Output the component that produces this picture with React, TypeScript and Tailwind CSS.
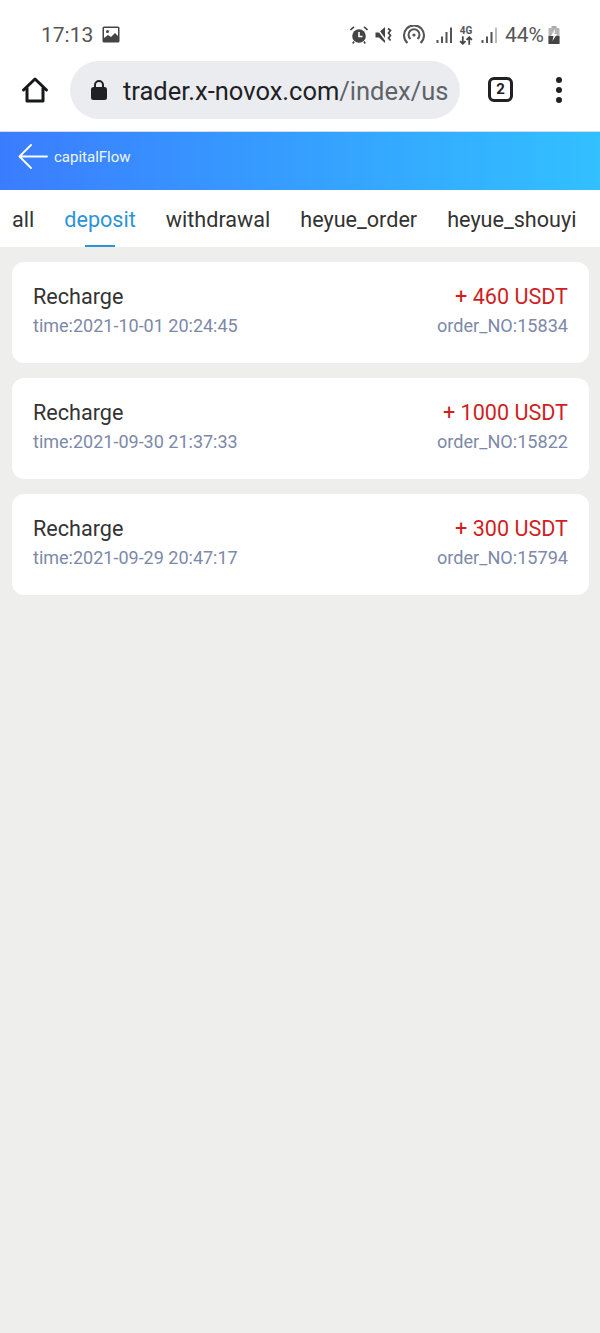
const records = [
  { amount: '+ 460 USDT', time: 'time:2021-10-01 20:24:45', order: 'order_NO:15834' },
  { amount: '+ 1000 USDT', time: 'time:2021-09-30 21:37:33', order: 'order_NO:15822' },
  { amount: '+ 300 USDT', time: 'time:2021-09-29 20:47:17', order: 'order_NO:15794' },
]

const tabs = ['all', 'deposit', 'withdrawal', 'heyue_order', 'heyue_shouyi']

function Signal({ faded }: { faded?: boolean }) {
  return (
    <svg width="17" height="17" viewBox="0 0 17 17" fill="#555">
      <rect x="0.5" y="13" width="2" height="3" />
      <rect x="5" y="9.5" width="2" height="6.5" />
      <rect x="9.5" y="5" width="2" height="11" />
      <rect x="14" y="0.5" width="2" height="15.5" fill={faded ? '#bbb' : '#555'} />
    </svg>
  )
}

function StatusBar() {
  return (
    <div className="flex h-[52px] items-end justify-between pl-[41px] pr-[40px] pb-[4px] text-[#555]">
      <div className="flex items-center gap-[9px]">
        <span className="text-[21px] leading-[26px]">17:13</span>
        <svg width="18" height="17" viewBox="0 0 18 17" className="mb-[2px]">
          <rect x="0.5" y="0.5" width="17" height="16" rx="1.5" fill="#444" />
          <rect x="2" y="2" width="14" height="13" fill="#fff" />
          <circle cx="5.5" cy="5.5" r="1.5" fill="#444" />
          <path d="M2 15v-3l4-3 3 2 4-4 3 3v5z" fill="#444" />
        </svg>
      </div>
      <div className="flex items-center">
        <svg width="18" height="18" viewBox="0 0 18 18" fill="#444" className="mr-[7px]">
          <circle cx="9" cy="10" r="6.8" />
          <path d="M9 6v4.5h3.5" stroke="#fff" strokeWidth="1.6" fill="none" />
          <path d="M0.5 4 4 0.8M17.5 4 14 0.8M4 15.5 2.8 17.5M14 15.5l1.2 2" stroke="#444" strokeWidth="1.6" />
        </svg>
        <svg width="18" height="18" viewBox="0 0 18 18" fill="#444" className="mr-[10px]">
          <path d="M0.5 6.5h3.5L10 1v16l-6-5.5H0.5z" />
          <path d="M1 1l11 15" stroke="#fff" strokeWidth="1.5" />
          <path d="M13 2.5l2.5 2-2 2.5 2 2.5-2 2.5 2 2.5" stroke="#444" strokeWidth="1.7" fill="none" />
        </svg>
        <svg width="22" height="20" viewBox="0 0 22 20" fill="none" stroke="#555" strokeWidth="2" className="mr-[11px]">
          <path d="M4.5 18A10 10 0 1 1 17.5 18" />
          <path d="M7.5 14A5.5 5.5 0 1 1 14.5 14" />
          <circle cx="11" cy="10" r="1.6" fill="#555" stroke="none" />
        </svg>
        <Signal />
        <div className="ml-[6px] mr-[8px] flex w-[14px] flex-col items-center">
          <span className="text-[10px] font-bold leading-[10px]">4G</span>
          <svg width="14" height="9" viewBox="0 0 13 8" fill="none" stroke="#444" strokeWidth="1.6">
            <path d="M3.5 0v7M1 4.5l2.5 2.5L6 4.5M9.5 8V1M7 3.5 9.5 1 12 3.5" />
          </svg>
        </div>
        <Signal faded />
        <span className="ml-[7px] text-[21px] leading-[26px]">44%</span>
        <svg width="12" height="18" viewBox="0 0 12 18" className="ml-[4px]">
          <rect x="3.5" y="0" width="5" height="2" fill="#aaa" />
          <rect x="0.5" y="2" width="11" height="16" rx="1" fill="#b5b5b5" />
          <rect x="0.5" y="10" width="11" height="8" fill="#444" />
          <path d="M7 3 3 10h2.5L4.5 15 9 8H6.5z" fill="#fff" />
        </svg>
      </div>
    </div>
  )
}

function BrowserBar() {
  return (
    <div className="flex h-[79px] items-center pb-[4px]">
      <div className="flex w-[70px] justify-center">
        <svg width="28" height="28" viewBox="0 0 28 28" fill="none" stroke="#16181b" strokeWidth="3" strokeLinejoin="round" strokeLinecap="round">
          <path d="M2.5 14 14 3l11.5 11M6 12v13h16V12" />
        </svg>
      </div>
      <div className="flex h-[58px] w-[390px] items-center rounded-full bg-[#ebecf0] pl-[20px]">
        <svg width="18" height="22" viewBox="0 0 18 22" className="mr-[15px] shrink-0">
          <path d="M5 9V6a4 4 0 0 1 8 0v3" fill="none" stroke="#202124" strokeWidth="2" />
          <rect x="1" y="8" width="16" height="13" rx="2.5" fill="#202124" />
        </svg>
        <span className="overflow-hidden pt-[3px] text-[25.5px] leading-[32px] whitespace-nowrap text-[#202124]">
          trader.x-novox.com<span className="text-[#5f6368]">/index/us</span>
        </span>
      </div>
      <div className="ml-[28px] flex h-[25px] w-[25px] items-center justify-center rounded-[6px] border-[3px] border-[#202124] text-[15px] font-bold text-[#202124]">
        2
      </div>
      <div className="ml-[43px] flex flex-col gap-[4px]">
        <span className="h-[6px] w-[6px] rounded-full bg-[#202124]" />
        <span className="h-[6px] w-[6px] rounded-full bg-[#202124]" />
        <span className="h-[6px] w-[6px] rounded-full bg-[#202124]" />
      </div>
    </div>
  )
}

export default function App() {
  return (
    <div className="flex min-h-[1333px] flex-col bg-[#eeeeec] font-['Roboto',sans-serif]">
      <div className="bg-white">
        <StatusBar />
        <BrowserBar />
      </div>

      <div className="flex h-[59px] items-start gap-[6px] border-t border-[#d5dbe4] bg-gradient-to-r from-[#3b7cff] to-[#32c0ff] pt-[12px] pl-[18px]">
        <svg width="30" height="26" viewBox="0 0 30 26" fill="none" stroke="#fff" strokeWidth="1.8" strokeLinecap="round" strokeLinejoin="round">
          <path d="M29 12.5H2M13 1 1.5 12.5 13 24" />
        </svg>
        <span className="text-[15px] leading-[26px] text-[#f0f6ff]">capitalFlow</span>
      </div>

      <div className="flex h-[57px] gap-[30px] bg-white pl-[12px]">
        {tabs.map((tab) => (
          <div key={tab} className="relative pt-[17px]">
            <span className={`whitespace-nowrap text-[21.6px] leading-[26px] ${tab === 'deposit' ? 'text-[#2e93d6]' : 'text-[#333]'}`}>
              {tab}
            </span>
            {tab === 'deposit' && (
              <div className="absolute bottom-0 left-[21px] h-[2px] w-[30px] bg-[#2e93d6]" />
            )}
          </div>
        ))}
      </div>

      <div className="flex flex-col gap-[15px] pr-[11px] pl-[12px] pt-[15px]">
        {records.map((r) => (
          <div key={r.order} className="flex h-[101px] justify-between rounded-[12px] bg-white px-[21px] pt-[21px]">
            <div>
              <div className="text-[21.6px] leading-[28px] text-[#333]">Recharge</div>
              <div className="text-[18px] leading-[30px] text-[#7d89a8]">{r.time}</div>
            </div>
            <div className="text-right">
              <div className="text-[21.6px] leading-[28px] text-[#cf1f1f]">{r.amount}</div>
              <div className="text-[18.1px] leading-[30px] text-[#7d89a8]">{r.order}</div>
            </div>
          </div>
        ))}
      </div>
    </div>
  )
}
